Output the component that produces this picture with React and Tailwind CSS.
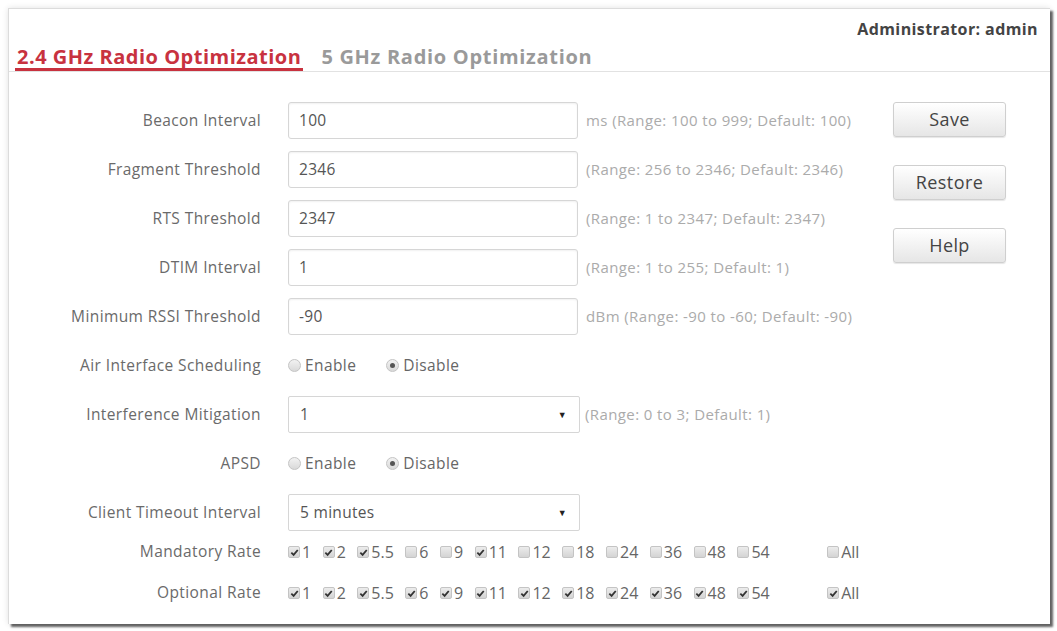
import React from 'react'

const RATES = ['1', '2', '5.5', '6', '9', '11', '12', '18', '24', '36', '48', '54']
const MANDATORY = ['1', '2', '5.5', '11']

function Label({ children }) {
  return (
    <div className="w-[253px] shrink-0 text-right pr-[1px] text-[15.5px] tracking-[0.4px] text-[#6a6a6a] whitespace-nowrap">
      {children}
    </div>
  )
}

function Hint({ children }) {
  return <div className="text-[15px] tracking-[0.4px] text-[#ababab] whitespace-nowrap">{children}</div>
}

function TextRow({ label, value, hint }) {
  return (
    <div className="flex items-center h-[37px]">
      <Label>{label}</Label>
      <div className="ml-[26px] w-[290px] h-[37px] border border-[#d6d6d6] rounded-[3px] shadow-[inset_0_1px_2px_rgba(0,0,0,0.06)] flex items-center px-[10px] text-[15.5px] tracking-[0.3px] text-[#555]">
        {value}
      </div>
      <div className="ml-[8px]">
        <Hint>{hint}</Hint>
      </div>
    </div>
  )
}

function SelectRow({ label, value, hint }) {
  return (
    <div className="flex items-center h-[37px]">
      <Label>{label}</Label>
      <div className="ml-[26px] w-[292px] h-[37px] border border-[#d6d6d6] rounded-[2px] flex items-center justify-between pl-[11px] pr-[12px] text-[15.5px] tracking-[0.3px] text-[#555]">
        <span>{value}</span>
        <span className="text-[9px] text-[#222]">▼</span>
      </div>
      {hint && (
        <div className="ml-[5px]">
          <Hint>{hint}</Hint>
        </div>
      )}
    </div>
  )
}

function Radio({ checked, children }) {
  return (
    <div className="flex items-center">
      <span className="w-[13px] h-[13px] rounded-full border border-[#c4c4c4] bg-gradient-to-b from-[#f2f2f2] to-[#d9d9d9] flex items-center justify-center">
        {checked && <span className="w-[5px] h-[5px] rounded-full bg-[#555]" />}
      </span>
      <span className="ml-[4px] text-[15.5px] tracking-[0.4px] text-[#666]">{children}</span>
    </div>
  )
}

function RadioRow({ label }) {
  return (
    <div className="flex items-center h-[37px]">
      <Label>{label}</Label>
      <div className="ml-[26px] flex items-center gap-[30px]">
        <Radio>Enable</Radio>
        <Radio checked>Disable</Radio>
      </div>
    </div>
  )
}

function Check({ checked, children, className }) {
  return (
    <div className={'flex items-center ' + (className || '')}>
      <span className="w-[12px] h-[12px] rounded-[2px] border border-[#c4c4c4] bg-gradient-to-b from-[#ececec] to-[#d4d4d4] flex items-center justify-center">
        {checked && (
          <svg width="9" height="9" viewBox="0 0 10 10">
            <path d="M1.5 5.2 L4 7.6 L8.6 2.2" fill="none" stroke="#333" strokeWidth="2" />
          </svg>
        )}
      </span>
      <span className="ml-[2px] text-[16px] text-[#666]">{children}</span>
    </div>
  )
}

function RateRow({ label, isChecked, all }) {
  return (
    <div className="flex items-center h-[28px]">
      <Label>{label}</Label>
      <div className="ml-[26px] flex items-center gap-[11.5px]">
        {RATES.map((r) => (
          <Check key={r} checked={isChecked(r)}>
            {r}
          </Check>
        ))}
        <Check checked={all} className="ml-[46px]">
          All
        </Check>
      </div>
    </div>
  )
}

function Button({ children }) {
  return (
    <div className="w-[113px] h-[35px] border border-[#cfcfcf] rounded-[3px] bg-gradient-to-b from-[#ffffff] to-[#e6e6e6] shadow-[0_1px_1px_rgba(0,0,0,0.1)] flex items-center justify-center text-[18px] tracking-[0.4px] text-[#444]">
      {children}
    </div>
  )
}

export default function App() {
  return (
    <div className="w-[1057px] h-[631px] bg-white overflow-hidden pt-[8px] pl-[8px]" style={{ fontFamily: '"Open Sans", "Noto Sans", sans-serif' }}>
      <div className="w-[1042px] h-[616px] bg-white border-l border-t border-[#dcdcdc] shadow-[3px_3px_2px_rgba(0,0,0,0.6),0_0_6px_rgba(0,0,0,0.12)]">
        {/* Header */}
        <div className="h-[63px] flex flex-col border-b border-[#e2e2e2]">
          <div className="h-[36px] flex justify-end items-center pr-[12px] pt-[3px]">
            <span className="text-[16px] tracking-[0.4px] font-bold text-[#444]">Administrator: admin</span>
          </div>
          <div className="flex-1 flex items-end pl-[6px]">
            <div className="px-[2px] border-b-[3px] border-[#c8323f] text-[20px] tracking-[0.5px] font-bold text-[#c8323f] leading-[22px]">
              2.4 GHz Radio Optimization
            </div>
            <div className="ml-[18px] pb-[3px] text-[20px] tracking-[0.7px] font-bold text-[#9a9a9a] leading-[22px]">
              5 GHz Radio Optimization
            </div>
          </div>
        </div>

        {/* Form */}
        <div className="flex pt-[30px]">
          <div className="w-[884px] flex flex-col gap-[12px]">
            <TextRow label="Beacon Interval" value="100" hint="ms (Range: 100 to 999; Default: 100)" />
            <TextRow label="Fragment Threshold" value="2346" hint="(Range: 256 to 2346; Default: 2346)" />
            <TextRow label="RTS Threshold" value="2347" hint="(Range: 1 to 2347; Default: 2347)" />
            <TextRow label="DTIM Interval" value="1" hint="(Range: 1 to 255; Default: 1)" />
            <TextRow label="Minimum RSSI Threshold" value="-90" hint="dBm (Range: -90 to -60; Default: -90)" />
            <RadioRow label="Air Interface Scheduling" />
            <SelectRow label="Interference Mitigation" value="1" hint="(Range: 0 to 3; Default: 1)" />
            <RadioRow label="APSD" />
            <SelectRow label="Client Timeout Interval" value="5 minutes" />
            <div className="flex flex-col gap-[13px] -mt-[5px]">
              <RateRow label="Mandatory Rate" isChecked={(r) => MANDATORY.includes(r)} all={false} />
              <RateRow label="Optional Rate" isChecked={() => true} all />
            </div>
          </div>
          <div className="flex flex-col gap-[28px]">
            <Button>Save</Button>
            <Button>Restore</Button>
            <Button>Help</Button>
          </div>
        </div>
      </div>
    </div>
  )
}
